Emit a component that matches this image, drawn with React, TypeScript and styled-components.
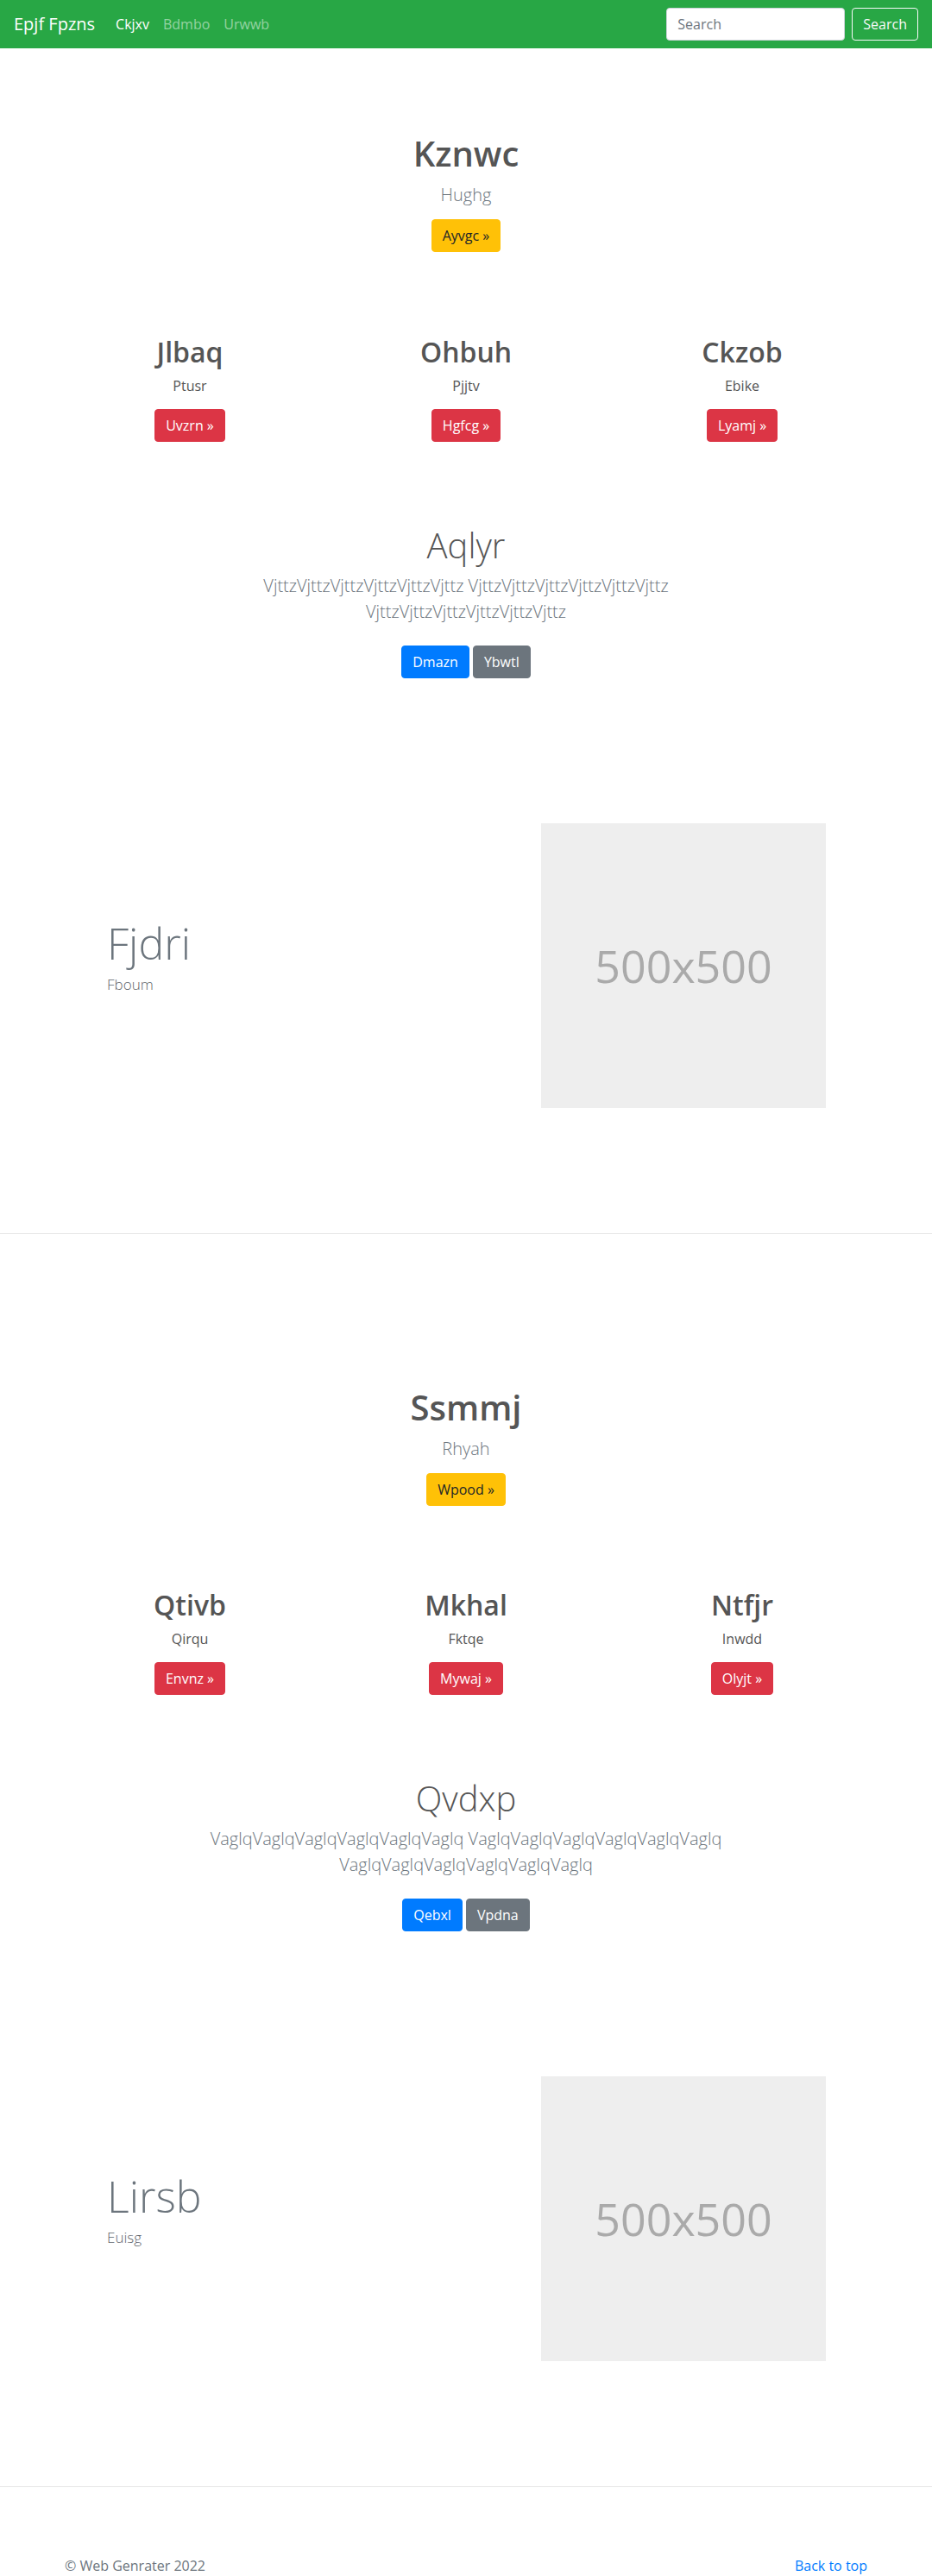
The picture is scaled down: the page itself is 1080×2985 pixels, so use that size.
import React from "react";
import styled, { createGlobalStyle } from "styled-components";

const GlobalStyle = createGlobalStyle`
  * { box-sizing: border-box; }
  html, body { margin: 0; padding: 0; background: #fff; }
  body {
    font-family: "Open Sans", "Noto Sans", sans-serif;
    font-size: 16px;
    line-height: 1.5;
    color: #212529;
  }
`;

const Navbar = styled.nav`
  height: 56px;
  background: #28a745;
  display: flex;
  align-items: center;
  padding: 0 16px;
`;

const Brand = styled.a`
  font-size: 20px;
  line-height: 30px;
  color: #fff;
  margin-right: 16px;
  text-decoration: none;
  white-space: nowrap;
`;

const NavList = styled.ul`
  display: flex;
  list-style: none;
  margin: 0;
  padding: 0;
  flex: 1;
`;

const NavLink = styled.a<{ $active?: boolean }>`
  display: block;
  padding: 8px;
  font-size: 16px;
  line-height: 24px;
  color: ${(p) => (p.$active ? "#fff" : "rgba(255,255,255,0.5)")};
  text-decoration: none;
`;

const SearchForm = styled.form`
  display: flex;
  align-items: center;
  gap: 8px;
`;

const SearchInput = styled.input`
  width: 207px;
  height: 38px;
  padding: 6px 12px;
  font-family: inherit;
  font-size: 16px;
  border: 1px solid #ced4da;
  border-radius: 4px;
  background: #fff;
  color: #495057;
  &::placeholder { color: #6c757d; }
`;

const OutlineButton = styled.button`
  height: 38px;
  padding: 6px 12px;
  font-family: inherit;
  font-size: 16px;
  line-height: 24px;
  color: #f8f9fa;
  background: transparent;
  border: 1px solid #f8f9fa;
  border-radius: 4px;
`;

const Section = styled.section`
  padding: 98px 0 145px;
`;

const Container = styled.div`
  width: 960px;
  margin: 0 auto;
  padding: 0 15px;
`;

const Center = styled.div`
  text-align: center;
`;

const HeroTitle = styled.h1`
  margin: 0;
  font-size: 40px;
  line-height: 48px;
  font-weight: 600;
  color: #555;
`;

const Lead = styled.p<{ $gap: number }>`
  margin: ${(p) => p.$gap}px 0 0;
  font-size: 20px;
  line-height: 30px;
  font-weight: 300;
  color: #6c757d;
`;

const ButtonRow = styled.div<{ $gap: number }>`
  margin-top: ${(p) => p.$gap}px;
  display: flex;
  justify-content: center;
  gap: 4px;
`;

const variants: Record<string, { bg: string; fg: string }> = {
  warning: { bg: "#ffc107", fg: "#212529" },
  danger: { bg: "#dc3545", fg: "#fff" },
  primary: { bg: "#007bff", fg: "#fff" },
  secondary: { bg: "#6c757d", fg: "#fff" },
};

const Btn = styled.a<{ $variant: string }>`
  display: inline-block;
  padding: 6px 12px;
  font-size: 16px;
  line-height: 24px;
  border: 1px solid ${(p) => variants[p.$variant].bg};
  border-radius: 4px;
  background: ${(p) => variants[p.$variant].bg};
  color: ${(p) => variants[p.$variant].fg};
  text-decoration: none;
  white-space: nowrap;
`;

const Columns = styled.div`
  margin: 96.5px -15px 0;
  display: grid;
  grid-template-columns: repeat(3, 1fr);
`;

const Column = styled.div`
  padding: 0 15px;
  text-align: center;
`;

const ColTitle = styled.h2`
  margin: 0;
  font-size: 32px;
  line-height: 38px;
  font-weight: 600;
  color: #555;
`;

const ColText = styled.p`
  margin: 8px 0 0;
  font-size: 16px;
  line-height: 24px;
  color: #555;
`;

const Cta = styled.div`
  margin-top: 96px;
  text-align: center;
`;

const CtaTitle = styled.h1`
  margin: 0;
  font-size: 40px;
  line-height: 48px;
  font-weight: 300;
  color: #555;
`;

const CtaText = styled.p`
  max-width: 630px;
  margin: 8px auto 0;
  font-size: 20px;
  line-height: 30px;
  font-weight: 300;
  color: #6c757d;
`;

const Feature = styled.div`
  margin: 168px -15px 0;
  display: grid;
  grid-template-columns: 1fr 1fr;
  align-items: center;
`;

const FeatureText = styled.div`
  padding-left: 64px;
  padding-bottom: 22px;
`;

const FeatureTitle = styled.h2`
  margin: 0;
  font-size: 50px;
  line-height: 60px;
  font-weight: 300;
  color: #6c757d;
`;

const FeatureSub = styled.p`
  margin: 6px 0 0;
  font-size: 17px;
  line-height: 24px;
  font-weight: 300;
  color: #5f666d;
`;

const FeatureMedia = styled.div`
  padding-left: 87px;
`;

const Placeholder = styled.div`
  width: 330px;
  height: 330px;
  background: #eee;
  color: #aaa;
  display: flex;
  align-items: center;
  justify-content: center;
  font-size: 52px;
  line-height: 1;
`;

const Divider = styled.hr`
  margin: 0 0 79px;
  border: 0;
  border-top: 1px solid #e6e6e6;
  height: 0;
`;

const Footer = styled.footer`
  padding: 0 0 48px;
`;

const FooterRow = styled.div`
  display: flex;
  justify-content: space-between;
  font-size: 16px;
  line-height: 24px;
`;

const Copy = styled.span`
  color: #6c757d;
`;

const TopLink = styled.a`
  color: #007bff;
  text-decoration: none;
`;

type Block = {
  hero: { title: string; sub: string; btn: string };
  cols: { t: string; s: string; b: string }[];
  cta: { title: string; word: string; primary: string; secondary: string };
  feature: { title: string; sub: string };
};

const blocks: Block[] = [
  {
    hero: { title: "Kznwc", sub: "Hughg", btn: "Ayvgc »" },
    cols: [
      { t: "Jlbaq", s: "Ptusr", b: "Uvzrn »" },
      { t: "Ohbuh", s: "Pjjtv", b: "Hgfcg »" },
      { t: "Ckzob", s: "Ebike", b: "Lyamj »" },
    ],
    cta: { title: "Aqlyr", word: "Vjttz", primary: "Dmazn", secondary: "Ybwtl" },
    feature: { title: "Fjdri", sub: "Fboum" },
  },
  {
    hero: { title: "Ssmmj", sub: "Rhyah", btn: "Wpood »" },
    cols: [
      { t: "Qtivb", s: "Qirqu", b: "Envnz »" },
      { t: "Mkhal", s: "Fktqe", b: "Mywaj »" },
      { t: "Ntfjr", s: "Inwdd", b: "Olyjt »" },
    ],
    cta: { title: "Qvdxp", word: "Vaglq", primary: "Qebxl", secondary: "Vpdna" },
    feature: { title: "Lirsb", sub: "Euisg" },
  },
];

function ContentBlock({ block }: { block: Block }) {
  const para = [0, 1, 2].map(() => block.cta.word.repeat(6)).join(" ");
  return (
    <Section>
      <Container>
        <Center>
          <HeroTitle>{block.hero.title}</HeroTitle>
          <Lead $gap={9}>{block.hero.sub}</Lead>
          <ButtonRow $gap={13}>
            <Btn $variant="warning" href="#">{block.hero.btn}</Btn>
          </ButtonRow>
        </Center>
        <Columns>
          {block.cols.map((c) => (
            <Column key={c.t}>
              <ColTitle>{c.t}</ColTitle>
              <ColText>{c.s}</ColText>
              <ButtonRow $gap={15}>
                <Btn $variant="danger" href="#">{c.b}</Btn>
              </ButtonRow>
            </Column>
          ))}
        </Columns>
        <Cta>
          <CtaTitle>{block.cta.title}</CtaTitle>
          <CtaText>{para}</CtaText>
          <ButtonRow $gap={24}>
            <Btn $variant="primary" href="#">{block.cta.primary}</Btn>
            <Btn $variant="secondary" href="#">{block.cta.secondary}</Btn>
          </ButtonRow>
        </Cta>
        <Feature>
          <FeatureText>
            <FeatureTitle>{block.feature.title}</FeatureTitle>
            <FeatureSub>{block.feature.sub}</FeatureSub>
          </FeatureText>
          <FeatureMedia>
            <Placeholder>500x500</Placeholder>
          </FeatureMedia>
        </Feature>
      </Container>
    </Section>
  );
}

export default function App() {
  return (
    <>
      <GlobalStyle />
      <Navbar>
        <Brand href="#">Epjf Fpzns</Brand>
        <NavList>
          <li><NavLink $active href="#">Ckjxv</NavLink></li>
          <li><NavLink href="#">Bdmbo</NavLink></li>
          <li><NavLink href="#">Urwwb</NavLink></li>
        </NavList>
        <SearchForm onSubmit={(e) => e.preventDefault()}>
          <SearchInput type="search" placeholder="Search" aria-label="Search" />
          <OutlineButton type="submit">Search</OutlineButton>
        </SearchForm>
      </Navbar>
      {blocks.map((b, i) => (
        <React.Fragment key={i}>
          <ContentBlock block={b} />
          <Divider />
        </React.Fragment>
      ))}
      <Footer>
        <Container>
          <FooterRow>
            <Copy>© Web Genrater 2022</Copy>
            <TopLink href="#">Back to top</TopLink>
          </FooterRow>
        </Container>
      </Footer>
    </>
  );
}
